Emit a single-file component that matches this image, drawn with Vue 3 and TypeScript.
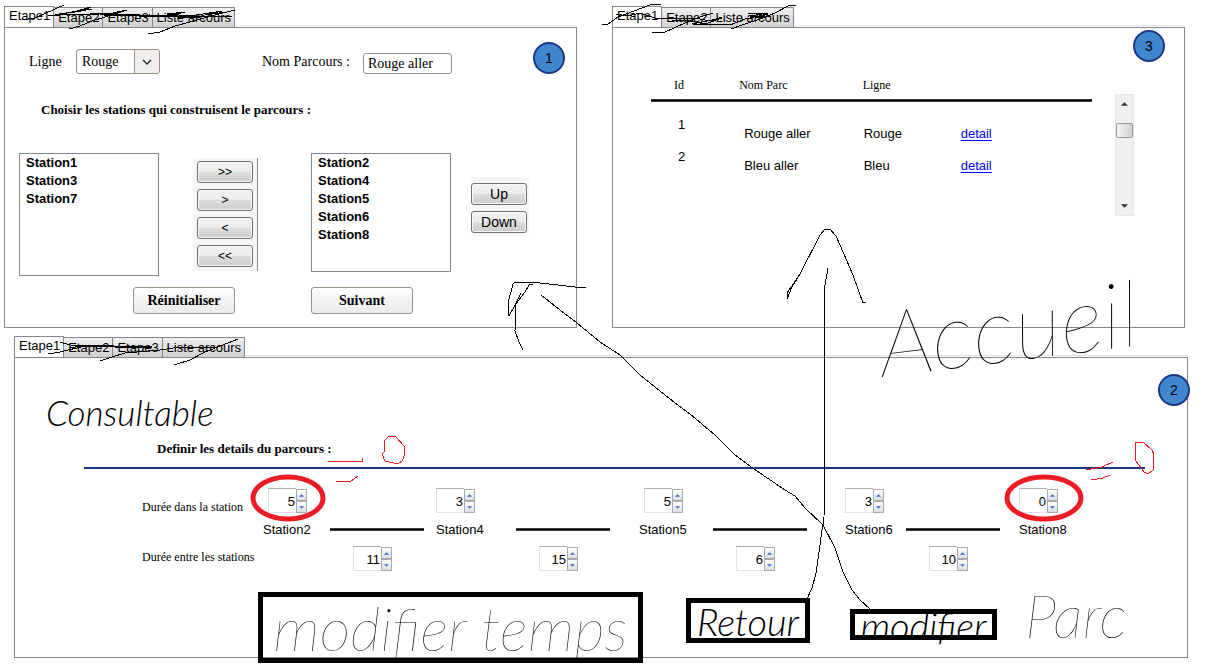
<script setup lang="ts">
import { ref } from 'vue'

interface Stop {
  name: string
  duration: number
  next?: number
  centered?: boolean
}

const CANVAS_WIDTH = 1211

const stepTabs = ['Etape1', 'Etape2', 'Etape3', 'Liste arcours']
const listTabs = ['Etape1', 'Etape2', 'Liste arcours']

const ligne = ref('Rouge')
const nomParcours = ref('Rouge aller')
const available = ['Station1', 'Station3', 'Station7']
const chosen = ['Station2', 'Station4', 'Station5', 'Station6', 'Station8']
const movers = ['>>', '>', '<', '<<']

const parcours = [
  { id: 1, nom: 'Rouge aller', ligne: 'Rouge' },
  { id: 2, nom: 'Bleu aller', ligne: 'Bleu' },
]

const stops = ref<Stop[]>([
  { name: 'Station2', duration: 5, next: 11, centered: true },
  { name: 'Station4', duration: 3, next: 15 },
  { name: 'Station5', duration: 5, next: 6, centered: true },
  { name: 'Station6', duration: 3, next: 10 },
  { name: 'Station8', duration: 0 },
])

const blackInk = [
  '22,20 35,18 46,13 53,10 57,8 64,5',
  '48,15 60,15 100,14 150,16 232,17',
  '55,15 84,10 91,7 70,13 92,9',
  '69,29 80,26 92,21 105,17 127,10 108,14 90,13',
  '104,16 150,15 168,16 185,12 167,14 190,16 222,11 205,15 226,12',
  '148,34 160,32 175,26 190,22 215,15 235,10',
  '602,24 608,24 618,17 634,11 650,5 661,4',
  '616,14 628,16 640,13 655,18 695,18 710,21 722,17',
  '652,33 665,32 685,23 700,17 713,13',
  '672,20 690,21 705,24 722,18 692,24 730,25 745,19 768,14',
  '731,29 745,24 760,19 775,13 790,5 796,5',
  '748,13 768,13 750,16 770,16 755,18 768,14',
  '60,342 70,345 150,347',
  '48,354 60,352 85,346',
  '100,361 112,357 125,353 160,350 180,347 215,347',
  '174,365 190,360 205,352 228,343 238,339',
  '586,288 575,287 540,283 515,282 513,284 508,303 509,316 515,305 525,292 529,285 533,284',
  '521,293 516,303 515,331 519,342 523,350',
  '541,295 560,310 577,323 600,342 620,355 640,375 670,399 690,414 715,435 735,455 754,469 785,490 795,496 805,508 823,525 835,548 843,572 852,590 860,600 870,609',
  '828,268 825,285 824,520 822,530 820,545 816,573 812,588 807,599',
  '787,299 787,293 800,274 820,235 825,229 830,229 836,236 840,245 853,275 863,303 866,302',
  '787,299 792,287 800,274',
]

const thickInk = ['100,14 125,15 155,16 200,17', '75,346 152,347']

const redInk = [
  '328,461 362,461 362,458',
  '336,481 351,481 358,476',
  '384,452 385,440 389,436 396,437 404,446 405,454 402,461 398,464 385,461 382,454 384,452',
  '1086,470 1102,467 1113,462',
  '1091,480 1103,478 1110,475',
  '1135,442 1143,442 1152,450 1154,455 1153,470 1148,474 1144,472 1136,461 1135,442',
]

const words = [
  { text: 'Consultable', x: 46, y: 395, kind: 'small' },
  { text: 'Accueil', x: 882, y: 296, kind: 'huge' },
  { text: 'Parc', x: 1025, y: 585, kind: 'large' },
]

const boxes = [
  { text: 'modifier temps', x: 258, y: 592, w: 385, h: 71, kind: 'large' },
  { text: 'Retour', x: 686, y: 598, w: 124, h: 45, kind: 'medium' },
  { text: 'modifier', x: 850, y: 609, w: 147, h: 31, kind: 'medium' },
]

const share = (n: number) => `${(n / CANVAS_WIDTH) * 100}%`
</script>

<template>
  <main class="page">
    <div class="top">
      <section class="window">
        <div class="tabs" role="tablist">
          <button v-for="(t, i) in stepTabs" :key="t" class="tab" :class="{ active: i === 0 }" role="tab" :aria-selected="i === 0">{{ t }}</button>
        </div>
        <div class="panel">
          <span class="badge first">1</span>
          <div class="fields">
            <label for="ligne" class="ligne-label">Ligne</label>
            <div class="combo">
              <select id="ligne" v-model="ligne">
                <option>Rouge</option>
                <option>Bleu</option>
              </select>
              <svg class="chevron" viewBox="0 0 10 6" aria-hidden="true"><path d="M1 1l4 4 4-4" /></svg>
            </div>
            <label for="nom" class="nom-label">Nom Parcours :</label>
            <input id="nom" v-model="nomParcours" class="nom" type="text" />
          </div>
          <h2 class="choose">Choisir les stations qui construisent le parcours :</h2>
          <div class="picker">
            <select class="stations" multiple aria-label="Stations disponibles">
              <option v-for="s in available" :key="s">{{ s }}</option>
            </select>
            <div class="movers">
              <button v-for="m in movers" :key="m" class="push arrows">{{ m }}</button>
            </div>
            <select class="stations chosen" multiple aria-label="Stations choisies">
              <option v-for="s in chosen" :key="s">{{ s }}</option>
            </select>
            <div class="order">
              <button class="push">Up</button>
              <button class="push">Down</button>
            </div>
          </div>
          <div class="actions">
            <button class="action">Réinitialiser</button>
            <button class="action">Suivant</button>
          </div>
        </div>
      </section>

      <section class="window">
        <div class="tabs" role="tablist">
          <button v-for="(t, i) in listTabs" :key="t" class="tab" :class="{ active: i === 0 }" role="tab" :aria-selected="i === 0">{{ t }}</button>
        </div>
        <div class="panel list">
          <span class="badge third">3</span>
          <table>
            <thead>
              <tr>
                <th class="c-id">Id</th>
                <th class="c-nom">Nom Parc</th>
                <th class="c-ligne">Ligne</th>
                <th></th>
              </tr>
            </thead>
            <tbody>
              <tr v-for="p in parcours" :key="p.id">
                <td class="id">{{ p.id }}</td>
                <td class="name">{{ p.nom }}</td>
                <td>{{ p.ligne }}</td>
                <td><a href="#">detail</a></td>
              </tr>
            </tbody>
          </table>
          <div class="scroll" aria-hidden="true">
            <svg viewBox="0 0 8 4"><path d="M0 4L4 0L8 4z" /></svg>
            <div class="thumb"></div>
            <svg viewBox="0 0 8 4"><path d="M0 0L4 4L8 0z" /></svg>
          </div>
        </div>
      </section>
    </div>

    <section class="window bottom">
      <div class="tabs" role="tablist">
        <button v-for="(t, i) in stepTabs" :key="t" class="tab" :class="{ active: i === 0 }" role="tab" :aria-selected="i === 0">{{ t }}</button>
      </div>
      <div class="panel">
        <span class="badge second">2</span>
        <h2 class="define">Definir les details du parcours :</h2>
        <hr class="rule" />
        <div class="timeline">
          <div class="captions">
            <span>Durée dans la station</span>
            <span>Durée entre les stations</span>
          </div>
          <template v-for="s in stops" :key="s.name">
            <div class="stop">
              <div class="spin" :class="{ centered: s.centered }">
                <input :id="s.name" v-model="s.duration" type="number" />
                <span class="steps">
                  <button aria-label="Plus" @click="s.duration++"><svg viewBox="0 0 6 3"><path d="M0 3L3 0L6 3z" /></svg></button>
                  <button aria-label="Moins" @click="s.duration--"><svg viewBox="0 0 6 3"><path d="M0 0L3 3L6 0z" /></svg></button>
                </span>
              </div>
              <label :for="s.name">{{ s.name }}</label>
            </div>
            <div v-if="s.next !== undefined" class="leg">
              <div class="bar"></div>
              <div class="spin">
                <input v-model="s.next" type="number" :aria-label="'Durée après ' + s.name" />
                <span class="steps">
                  <button aria-label="Plus" @click="s.next++"><svg viewBox="0 0 6 3"><path d="M0 3L3 0L6 3z" /></svg></button>
                  <button aria-label="Moins" @click="s.next--"><svg viewBox="0 0 6 3"><path d="M0 0L3 3L6 0z" /></svg></button>
                </span>
              </div>
            </div>
          </template>
        </div>
      </div>
    </section>

    <div class="notes">
      <svg class="ink" viewBox="0 0 1211 667" preserveAspectRatio="none" aria-hidden="true">
        <polyline v-for="p in blackInk" :key="p" :points="p" />
        <polyline v-for="p in thickInk" :key="p" :points="p" class="thick" />
        <polyline v-for="p in redInk" :key="p" :points="p" class="red" />
        <ellipse cx="288" cy="498" rx="35" ry="21" />
        <ellipse cx="1044" cy="498" rx="37" ry="21" />
      </svg>
      <span v-for="w in words" :key="w.text" class="word" :class="w.kind" :style="{ left: share(w.x), top: w.y + 'px' }">{{ w.text }}</span>
      <button v-for="b in boxes" :key="b.text" class="box" :class="b.kind" :style="{ left: share(b.x), top: b.y + 'px', width: share(b.w), height: b.h + 'px' }">{{ b.text }}</button>
    </div>
  </main>
</template>

<style>
body {
  margin: 0;
  background: #fff;
}
</style>

<style scoped>
.page {
  position: relative;
  min-height: 667px;
  padding-top: 6px;
  font: 13px/16px "Liberation Sans", Arial, sans-serif;
  color: #000;
  overflow: hidden;
}
.page *,
.page {
  box-sizing: border-box;
}
button,
input,
select {
  font: inherit;
  color: inherit;
  margin: 0;
}
.top {
  display: grid;
  grid-template-columns: 1fr 1fr;
  gap: 35px;
  margin: 0 26px 0 4px;
}
.bottom {
  margin: 8px 23px 0 14px;
}
.tabs {
  display: flex;
  align-items: flex-end;
  height: 21px;
  background: linear-gradient(#dfe0e4, #dfe0e4) 0 19px / 100% 1px no-repeat;
}
.tab {
  height: 20px;
  margin-right: -1px;
  padding: 1px 3px 0 4px;
  border: 1px solid #85868f;
  border-bottom: 0;
  border-radius: 0;
  background: linear-gradient(#f0f0f0, #d0d0d0);
  line-height: 16px;
  white-space: nowrap;
}
.tab.active {
  height: 21px;
  padding-bottom: 3px;
  background: #fff;
}
.panel {
  position: relative;
  min-height: 301px;
  border: 1px solid #85868f;
}
.badge {
  position: absolute;
  width: 32px;
  height: 32px;
  border: 2px solid #1c3687;
  border-radius: 50%;
  background: #4187ce;
  font-size: 14px;
  line-height: 28px;
  text-align: center;
}
.badge.first { right: 11px; top: 14px; }
.badge.third { right: 19px; top: 2px; }
.badge.second { right: -3px; top: 16px; }

.fields {
  display: flex;
  align-items: center;
  padding: 21px 0 0 24px;
  font: 14px/16px "Liberation Serif", "Times New Roman", serif;
}
.ligne-label { width: 47px; }
.combo {
  position: relative;
  width: 84px;
  height: 25px;
}
.combo select {
  appearance: none;
  width: 100%;
  height: 100%;
  padding: 0 5px;
  border: 1px solid #9a8f83;
  border-radius: 3px;
  background: linear-gradient(90deg, #fff 57px, #9a8f83 57px, #9a8f83 58px, #f0efed 58px);
}
.chevron {
  position: absolute;
  right: 8px;
  top: 10px;
  width: 10px;
  height: 6px;
  fill: none;
  stroke: #333;
  stroke-width: 1.5;
  pointer-events: none;
}
.nom-label { margin-left: 102px; width: 101px; }
.nom {
  align-self: flex-end;
  width: 89px;
  height: 21px;
  padding: 0 4px;
  border: 1px solid #9a8f83;
  border-radius: 3px;
  background: #fff;
}
.choose,
.define {
  margin: 0;
  font: bold 13px/16px "Liberation Serif", "Times New Roman", serif;
}
.choose { margin: 28px 0 0 36px; }
.picker {
  display: flex;
  align-items: flex-start;
  margin: 35px 0 0 14px;
  height: 134px;
}
.stations {
  appearance: none;
  width: 140px;
  height: 123px;
  padding: 0;
  border: 1px solid #85868f;
  border-radius: 0;
  background: #fff;
  line-height: 18px;
  overflow: hidden;
}
.stations.chosen {
  height: 119px;
  margin-left: 53px;
}
.stations option {
  height: 18px;
  padding: 1px 6px 0;
  font-weight: bold;
}
.movers {
  display: grid;
  align-content: start;
  gap: 6px;
  width: 65px;
  height: 113px;
  margin: 5px 0 0 34px;
  padding: 3px 4px;
  border-right: 1px solid #85868f;
  background: #f5f6f8;
}
.order {
  display: grid;
  gap: 6px;
  width: 58px;
  margin: 24px 0 0 20px;
  padding: 6px 2px 3px 0;
  background: #f5f6f8;
}
.push {
  width: 56px;
  height: 22px;
  padding: 0;
  border: 1px solid #707070;
  border-radius: 3px;
  background: linear-gradient(#f3f3f3, #ebebeb 50%, #dcdcdc 50%, #cdcdcd);
  box-shadow: inset 0 0 0 1px #f8f8f8;
  font-size: 14px;
  line-height: 18px;
}
.push.arrows { font-size: 12px; }
.actions {
  display: flex;
  gap: 76px;
  padding-left: 128px;
}
.action {
  width: 102px;
  height: 27px;
  padding: 0;
  border: 1px solid #9a8f83;
  border-radius: 3px;
  background: linear-gradient(#fff, #f1f0f0 60%, #ebebeb);
  font: bold 14px/16px "Liberation Serif", "Times New Roman", serif;
}

.list {
  display: flex;
  align-items: flex-start;
  padding: 48px 50px 0 38px;
}
table {
  flex: 1;
  table-layout: fixed;
  border-collapse: collapse;
  background: linear-gradient(#777, #000 1px, #000 2px, #777 3px) 0 23px / 100% 3px no-repeat;
}
th {
  height: 26px;
  padding: 1px 0 0;
  font: 12px/16px "Liberation Serif", "Times New Roman", serif;
  text-align: left;
  vertical-align: top;
}
.c-id { width: 20%; padding-left: 23px; }
.c-nom { width: 28%; }
.c-ligne { width: 22%; }
td {
  height: 32px;
  padding: 9px 0 0 1px;
  vertical-align: top;
}
tbody::before {
  content: "";
  display: block;
  height: 15px;
}
.id { padding: 0 0 0 27px; }
.name { padding-left: 5px; }
a { color: #0000ff; text-underline-offset: 2px; }
.scroll {
  display: flex;
  flex-direction: column;
  align-items: center;
  width: 19px;
  height: 122px;
  margin: 18px 0 0 23px;
  padding: 7px 0;
  border: 1px solid #e6e6e6;
  background: #f0f0f0;
}
.scroll svg { width: 7px; height: 4px; fill: #333; }
.scroll svg:last-child { margin-top: auto; }
.thumb {
  width: 17px;
  height: 15px;
  margin-top: 17px;
  border: 1px solid #979797;
  border-radius: 2px;
  background: linear-gradient(90deg, #f5f5f5, #cfd0d3);
}

.define { margin: 83px 0 0 142px; }
.rule {
  height: 2px;
  margin: 10px 42px 0 69px;
  border: 0;
  background: #1c3687;
}
.timeline {
  display: grid;
  grid-template-columns: 121px 67fr 106fr 80fr 123fr 74fr 132fr 61fr 113fr 48px;
  margin: 19px 120px 0 127px;
}
.captions {
  display: flex;
  flex-direction: column;
  gap: 34px;
  padding-top: 11px;
  font: 12px/16px "Liberation Serif", "Times New Roman", serif;
  white-space: nowrap;
}
.stop label {
  display: block;
  margin-top: 9px;
}
.leg { padding-top: 40px; }
.bar {
  width: 94px;
  height: 3px;
  background: linear-gradient(#777, #000 1px, #000 2px, #777 3px);
}
.leg .spin { margin: 15px 0 0 23px; }
.spin {
  display: flex;
  width: 39px;
  height: 25px;
}
.spin.centered { margin-left: 5px; }
.spin input {
  appearance: textfield;
  width: 28px;
  height: 25px;
  padding: 1px 1px 0 0;
  border: 1px solid #dfe2ea;
  border-top-color: #a9a9ae;
  border-right: 0;
  border-radius: 0;
  background: #fff;
  text-align: right;
}
.spin input::-webkit-inner-spin-button {
  appearance: none;
  margin: 0;
}
.steps {
  display: grid;
  width: 11px;
  height: 24px;
  margin-top: 1px;
}
.steps button {
  display: grid;
  place-items: center;
  width: 11px;
  height: 12px;
  padding: 0;
  border: 1px solid #a9a9ae;
  border-radius: 0;
  background: linear-gradient(#fff, #dcdde2);
}
.steps svg { width: 5px; height: 3px; fill: #4468c4; }

.notes {
  position: absolute;
  inset: 0;
  pointer-events: none;
}
.ink {
  position: absolute;
  left: 0;
  top: 0;
  width: 100%;
  height: 667px;
}
.ink * { vector-effect: non-scaling-stroke; fill: none; }
.ink polyline {
  stroke: #000;
  stroke-width: 1px;
  shape-rendering: crispEdges;
}
.ink polyline.thick { stroke-width: 2px; }
.ink polyline.red { stroke: #ed1c24; }
.ink ellipse { stroke: #ed1c24; stroke-width: 5px; }
.word,
.box {
  position: absolute;
  font-family: Lato, "Open Sans", sans-serif;
  font-weight: 100;
  font-style: italic;
  line-height: 1;
  white-space: nowrap;
}
.small { font-size: 35px; font-weight: 300; }
.medium { font-size: 38px; font-weight: 300; }
.large { font-size: 60px; }
.huge {
  font-size: 92px;
  transform: rotate(-7deg);
  transform-origin: 0 80%;
}
.box {
  display: flex;
  align-items: center;
  justify-content: center;
  padding: 0;
  border: 5px solid #000;
  border-radius: 0;
  background: none;
  pointer-events: auto;
}
</style>
